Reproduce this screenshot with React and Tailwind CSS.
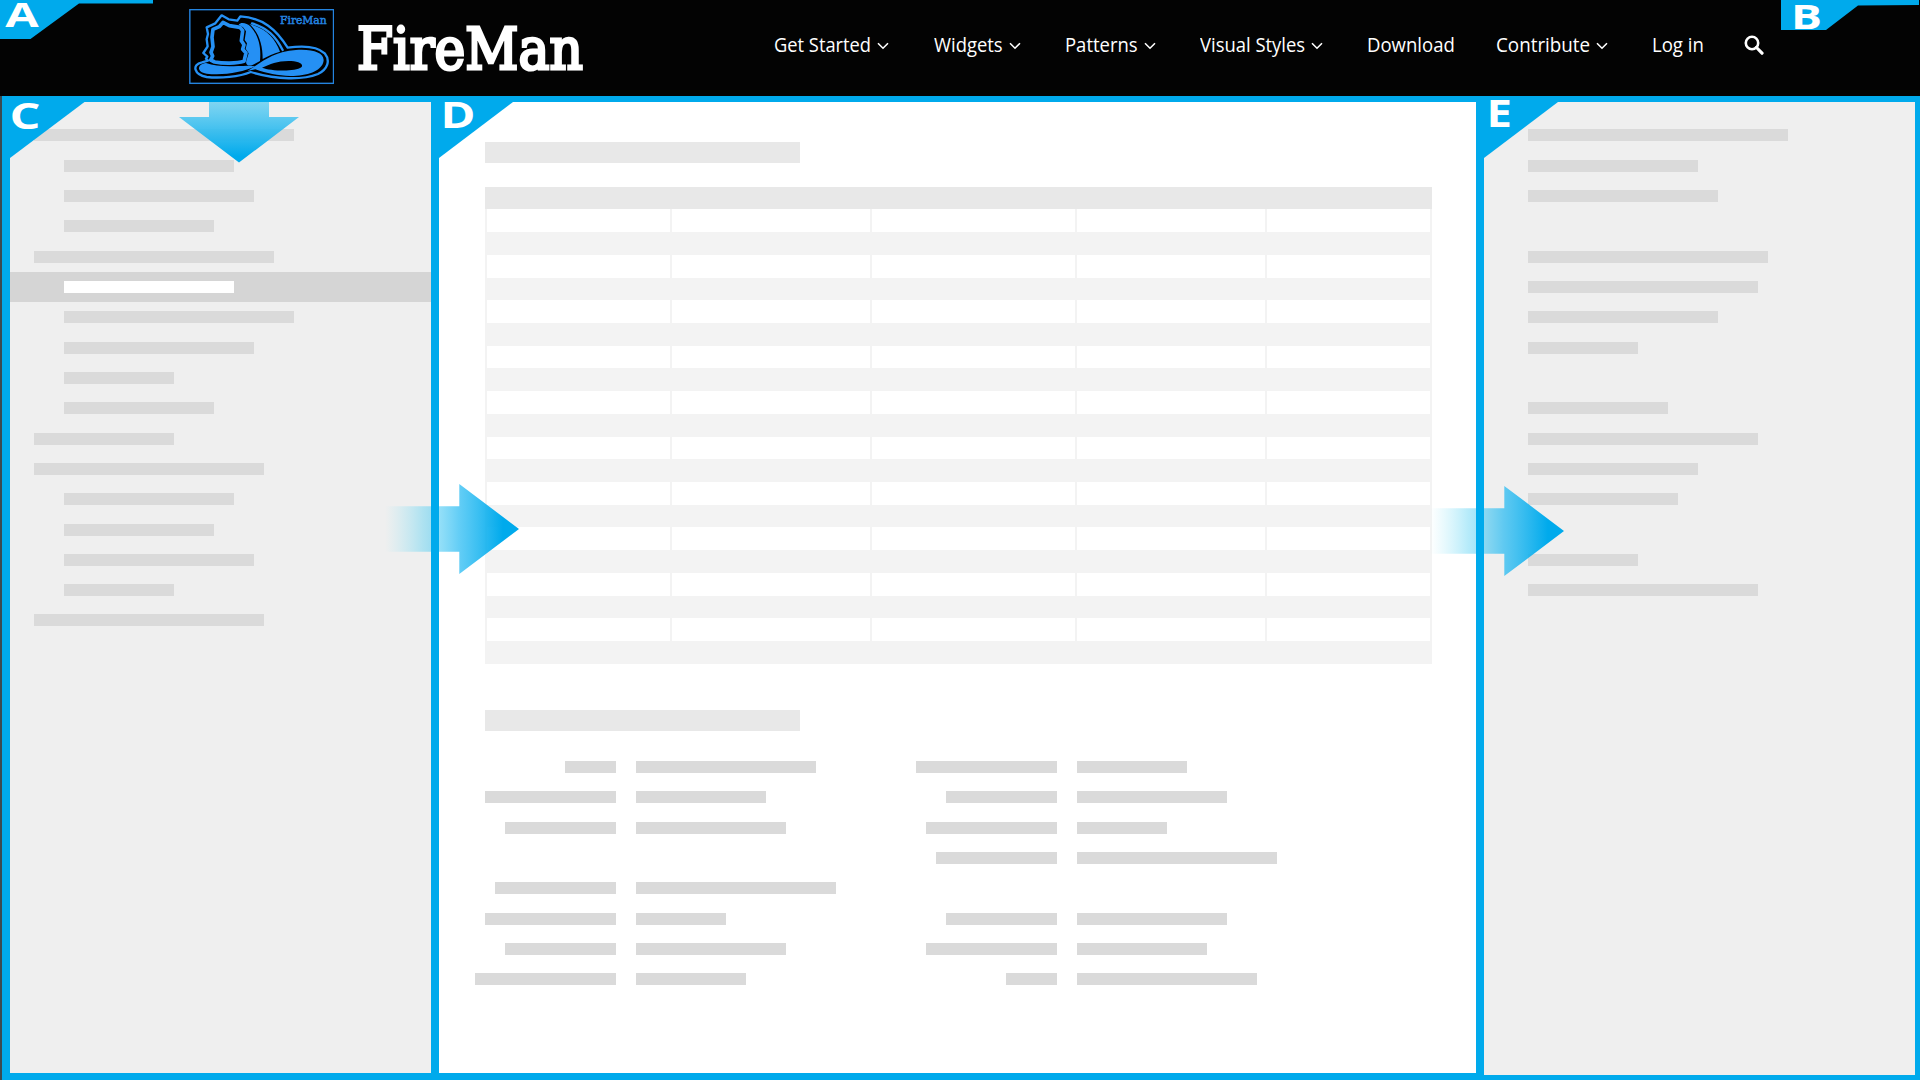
import React from "react";

const STEP = "h-[30.32px]";

function Bar({ w, color = "bg-[#dadada]" }) {
  return <div className={`h-3 shrink-0 ${color}`} style={{ width: w }} />;
}

const LEFT = [
  [0, 260.3], [1, 170.3], [1, 190.3], [1, 150.3], [0, 240.3], [1, 170.3, true],
  [1, 230.3], [1, 190.3], [1, 110.3], [1, 150.3], [0, 140.3], [0, 230.3],
  [1, 170.3], [1, 150.3], [1, 190.3], [1, 110.3], [0, 230.3],
];

const RIGHT = [
  260.4, 170.4, 190.4, 0, 240.4, 230.4, 190.4, 110.4, 0, 140.4, 230.4, 170.4,
  150.4, 0, 110.4, 230.4,
];

const FORM_A = [
  [50.2, 180.4], [130.2, 130.4], [110.2, 150.4], [0, 0], [120.2, 200.4],
  [130.2, 90.4], [110.2, 150.4], [140.2, 110.4],
];

const FORM_B = [
  [140.2, 110.4], [110.2, 150.4], [130.2, 90.4], [120.2, 200.4], [0, 0],
  [110.2, 150.4], [130.2, 130.4], [50.2, 180.4],
];

const NAV = [
  { label: "Get Started", menu: true, box: "w-[160px]", width: 97 },
  { label: "Widgets", menu: true, box: "w-[131px]", width: 69 },
  { label: "Patterns", menu: true, box: "w-[135px]", width: 73 },
  { label: "Visual Styles", menu: true, box: "w-[167px]", width: 105 },
  { label: "Download", box: "w-[129px]", width: 88 },
  { label: "Contribute", menu: true, box: "w-[156px]", width: 94 },
  { label: "Log in", box: "w-[92px]", width: 52 },
];

// Text squeezed or stretched horizontally to an exact width
function FitText({ children, width, className }) {
  const ref = React.useRef(null);
  React.useLayoutEffect(() => {
    const el = ref.current;
    el.style.transform = `scaleX(${width / el.offsetWidth})`;
  }, [width]);
  return (
    <span className="block shrink-0" style={{ width }}>
      <span ref={ref} className={`inline-block origin-left whitespace-nowrap ${className}`}>
        {children}
      </span>
    </span>
  );
}

function Logo() {
  return (
    <svg width="145" height="76" viewBox="27 27 435 228" className="block">
      <rect x="29.5" y="29" width="431" height="221" fill="#000" stroke="#2484e0" strokeWidth="4.2" />
      <g fill="none" stroke="#2590f4" strokeLinejoin="round" strokeLinecap="round">
        <path d="M84 182L78 176L82 170L70 159L83 139L80 118L84 102L80 82L106 70L125 46L146 58L172 62L181 49C250 54 288 88 323 143C365 137 412 139 434 160C452 182 443 207 414 222C370 240 290 240 212 216C178 231 120 235 80 231C42 224 34 194 66 187Z" strokeWidth="7" />
        <path d="M104 186L92 180L98 168L93 157L99 140L96 112L99 88L118 80L129 67L148 77L180 82L188 92L184 122L192 134L188 148L198 159L192 184C170 191 130 191 104 186Z" strokeWidth="11" />
        <path d="M216 70C262 84 286 108 308 150" strokeWidth="7" />
      </g>
      <path d="M176 74C182 66 200 68 212 80C236 108 244 140 240 183L216 196C203 199 196 192 199 182L206 160L197 146L201 130L194 120L198 94L189 82Z" fill="#2590f4" />
      <path d="M208 72C256 84 286 114 300 155C280 160 264 168 248 177C248 136 238 98 208 72Z" fill="#2590f4" />
      <path d="M78 189C110 201 150 199 204 197L226 199C188 218 126 227 80 221C48 216 52 192 78 189Z" fill="#2590f4" />
      <path fillRule="evenodd" d="M202 213C250 184 280 154 348 150C400 147 430 158 431 180C430 205 400 224 350 227C305 230 265 222 226 208ZM246 203C272 213 345 216 364 202C373 192 355 183 325 183C292 183 270 193 246 203Z" fill="#2590f4" />
      <text x="300" y="71" fontSize="34" textLength="140" lengthAdjust="spacingAndGlyphs" fill="#2484e0" stroke="#2484e0" strokeWidth="1.6" fontFamily="'DejaVu Serif', serif">FireMan</text>
    </svg>
  );
}

function Tag({ letter, className, size, points, x, y, len, fontSize }) {
  return (
    <svg width={size[0]} height={size[1]} className={`absolute z-20 overflow-visible ${className}`}>
      <polygon points={points} fill="#00aaec" />
      <text x={x} y={y} fontSize={fontSize} textLength={len} lengthAdjust="spacingAndGlyphs" fill="#fff" fontWeight="700" fontFamily="'Open Sans', sans-serif">
        {letter}
      </text>
    </svg>
  );
}

function SideArrow({ id, className }) {
  return (
    <svg width="134" height="92" className={`absolute ${className}`}>
      <defs>
        <linearGradient id={id} x1="0" x2="134" y1="0" y2="0" gradientUnits="userSpaceOnUse">
          <stop offset="0" stopColor="#7fe3f8" stopOpacity="0" />
          <stop offset=".28" stopColor="#55d0f3" stopOpacity=".42" />
          <stop offset=".55" stopColor="#22b9f2" stopOpacity=".7" />
          <stop offset=".88" stopColor="#00aaec" />
        </linearGradient>
      </defs>
      <path d="M0 23.300H74.300V1L134 46L74.300 91V68.700H0Z" fill={`url(#${id})`} />
      <rect x="46" width="8" height="92" fill="#00aaec" />
    </svg>
  );
}

function FormBlock({ rows, className }) {
  return (
    <div className={className}>
      {rows.map(([a, b], i) => (
        <div key={i} className={`flex gap-5 ${STEP}`}>
          <div className="flex w-[140.5px] justify-end"><Bar w={a} /></div>
          <Bar w={b} />
        </div>
      ))}
    </div>
  );
}

function Header() {
  return (
    <header className="relative flex h-24 bg-[#030303] text-white">
      <Tag letter="A" className="left-0 top-0" size={[153, 39]} points="0,0 153,0 153,3.500 79,3.500 30.500,39 0,39" x={5.300} y={27.300} len={33.500} fontSize={33.500} />
      <div className="ml-[189px] mt-[9px]"><Logo /></div>
      <div className="ml-[23px] mt-[13px]">
        <FitText width={226} className="text-[57px] leading-[72px] font-['DejaVu_Serif',serif] [-webkit-text-stroke:3px_white]">FireMan</FitText>
      </div>
      <nav className="absolute left-[774px] top-[30px] flex h-[30px] items-center font-['Open_Sans',sans-serif] text-[20px] leading-[30px]">
        {NAV.map((n) => (
          <div key={n.label} className={`flex items-center gap-[6px] ${n.box}`}>
            <FitText width={n.width} className="">{n.label}</FitText>
            {n.menu && (
              <svg width="12" height="8" viewBox="0 0 12 8" className="mt-[2px] shrink-0"><path d="M1 1.200L6 6.200L11 1.200" fill="none" stroke="#fff" strokeWidth="1.600" /></svg>
            )}
          </div>
        ))}
        <svg width="20" height="20" viewBox="0 0 20 20" className="shrink-0"><g fill="none" stroke="#fff"><circle cx="8" cy="8" r="6.200" strokeWidth="2.600" /><path d="M12.500 12.500L18 18.200" strokeWidth="3.200" strokeLinecap="round" /></g></svg>
      </nav>
      <Tag letter="B" className="right-px top-0" size={[138, 30]} points="0,0 138,0 138,5 77,5.500 45,30 0,30" x={10} y={29} len={31} fontSize={34} />
    </header>
  );
}

export default function App() {
  return (
    <div className="flex h-[1080px] w-[1920px] flex-col overflow-hidden bg-[#00aaec]">
      <Header />
      <div className="relative flex h-[984px] border-l-2 border-[#3c4a50] pl-2 pt-[6px]">
        <Tag letter="C" className="left-0 top-0" size={[84, 62]} points="0,0 84,0 82.500,6 8,62 0,62" x={7.500} y={33.200} len={31} fontSize={36} />
        <aside className="h-[971px] w-[421px] bg-[#efefef] pt-[18.300px]">
          {LEFT.map(([level, w, active], i) => (
            <div key={i} className={`flex items-center ${STEP} ${level ? "pl-[54px]" : "pl-6"} ${active ? "bg-[#d5d5d5]" : ""}`}>
              <Bar w={w} color={active ? "bg-white" : "bg-[#dadada]"} />
            </div>
          ))}
        </aside>
        <Tag letter="D" className="left-[429px] top-0" size={[84, 62]} points="0,0 84,0 82,6 8,62 0,62" x={9.500} y={31.700} len={35} fontSize={35} />
        <main className="ml-2 h-[971px] w-[1037px] bg-white pl-[46px] pt-[39.600px]">
          <div className="h-[21px] w-[315px] bg-[#e8e8e8]" />
          <div className="mt-[24.100px] w-[947px]">
            <div className="h-[22.730px] bg-[#e8e8e8]" />
            {Array.from({ length: 20 }, (_, i) => (
              <div key={i} className={`grid h-[22.730px] grid-cols-[185px_200px_205px_190px_165px] border-l-2 border-[#f3f3f3] ${i % 2 ? "bg-[#f3f3f3]" : "bg-white"}`}>
                {[0, 1, 2, 3, 4].map((c) => <div key={c} className="border-r-2 border-[#f3f3f3]" />)}
              </div>
            ))}
          </div>
          <div className="mt-[46px] h-[21px] w-[315px] bg-[#e8e8e8]" />
          <div className="mt-[30.300px] flex">
            <FormBlock rows={FORM_A} className="-ml-[10px] w-[441px]" />
            <FormBlock rows={FORM_B} />
          </div>
        </main>
        <Tag letter="E" className="left-[1474px] top-0" size={[84, 62]} points="0,0 84,0 82,6 8,62 0,62" x={10.500} y={30.700} len={25.500} fontSize={37} />
        <aside className="ml-2 h-[973px] w-[431px] bg-[#efefef] pl-[44px] pt-[27.400px]">
          {RIGHT.map((w, i) => <div key={i} className={STEP}><Bar w={w} /></div>)}
        </aside>
        <svg width="121" height="61" className="absolute left-[176.500px] top-[6px]">
          <defs>
            <linearGradient id="down" x1="0" x2="0" y1="0" y2="1">
              <stop offset="0" stopColor="#6bd0f2" stopOpacity=".85" />
              <stop offset=".9" stopColor="#00aaec" />
            </linearGradient>
          </defs>
          <path d="M30 0H90V15H120L60 60.500L0 15H30Z" fill="url(#down)" />
        </svg>
        <SideArrow id="arrow-d" className="left-[383px] top-[387px]" />
        <SideArrow id="arrow-e" className="left-[1428px] top-[389px]" />
      </div>
    </div>
  );
}
